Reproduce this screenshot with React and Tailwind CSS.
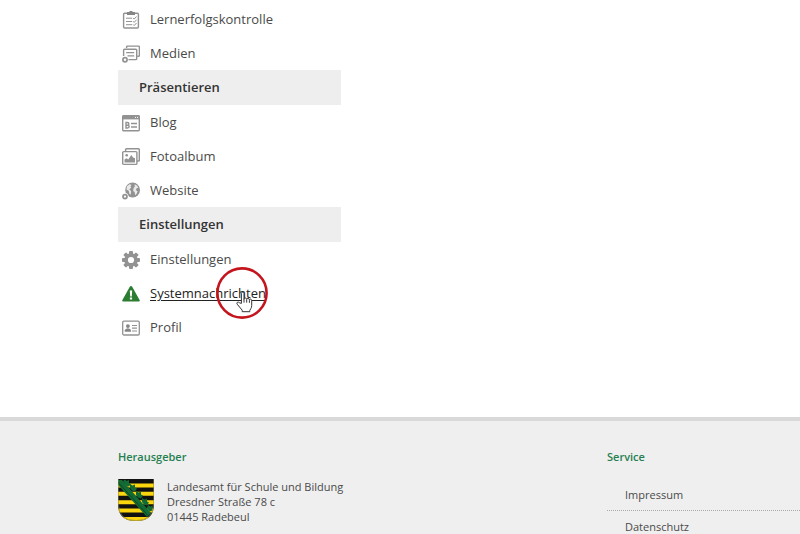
import React from "react";

const iconClass = "w-[18px] h-[18px] flex-shrink-0";

const icons = {
  checklist: (
    <svg className={iconClass} viewBox="0 0 18 18" fill="none" stroke="#929292">
      <rect x="1.6" y="2.2" width="14.8" height="14.8" rx="1" strokeWidth="1.4" />
      <path d="M5 1h2.2a1.9 1.9 0 0 1 3.6 0H13v3H5z" fill="#858585" stroke="none" />
      <path d="M4 7.2h6M4 10.5h6M4 13.7h6" />
      <path d="M11 6.9l1.2 1.2 2.3-2.6M11 10.2l1.2 1.2 2.3-2.6M11 13.4l1.2 1.2 2.3-2.6" />
    </svg>
  ),
  media: (
    <svg className={iconClass} viewBox="0 0 18 18" fill="none" stroke="#929292" strokeWidth="1.4">
      <path d="M4.6 3V2q0-.9.9-.9h11q.9 0 .9.9v8.4q0 .9-.9.9h-1.3" />
      <path d="M1.6 11V5.1q0-.9.9-.9h11.3q.9 0 .9.9v8.6q0 .9-.9.9H6.5" />
      <path d="M4.2 7.7h8M5.5 10.9h6.7" strokeWidth="1.2" />
      <circle cx="3" cy="14.8" r="2.1" strokeWidth="1.7" />
    </svg>
  ),
  blog: (
    <svg className={iconClass} viewBox="0 0 18 18" fill="none" stroke="#929292">
      <rect x="0.7" y="1.6" width="16.6" height="15.2" rx="1" strokeWidth="1.4" />
      <path d="M0.6 1.4h16.8v4H0.6z" fill="#929292" stroke="none" />
      <path d="M13 3.4h1M15 3.4h1" stroke="#fff" />
      <path d="M4 8.5v5.5M3.3 8.5h2.2q1.4 0 1.4 1.3t-1.4 1.4H4.2M5.5 11.2q1.7 0 1.7 1.4T5.5 14H3.3" strokeWidth="1.4" />
      <path d="M9 9.5h6M9 13h6" strokeWidth="1.6" />
    </svg>
  ),
  photo: (
    <svg className={iconClass} viewBox="0 0 18 18" fill="none" stroke="#929292" strokeWidth="1.4">
      <path d="M3.6 3V1.4q0-.6.8-.6h12.2q.7 0 .7.8v10.6q0 .8-.8.8H15" />
      <rect x="0.7" y="3.6" width="14.2" height="12.8" rx="1" />
      <path d="M2.5 14.5v-3l2-1.2 1.8 1.2 3-4.5 1.8 2.6 1.9.6v4.3z" fill="#929292" stroke="none" />
      <circle cx="4.7" cy="7.2" r="1.3" fill="#929292" stroke="none" />
    </svg>
  ),
  website: (
    <svg className={iconClass} viewBox="0 0 18 18">
      <circle cx="10.6" cy="8" r="7.4" fill="#929292" />
      <path
        d="M5 4.2l2.6-1.9 1.8.4-.9 1.8.7 1.2-1.9 1.6 1.8 2-.4 3.4-1.3-1-.7-2.9-2.3-1.2zM12.6 2.2l2.4 1.3 1.3 2.3-1.6.4-1 1.8 1.9 1.2-.9 2.6-1.6 1.4-.4-3-1.6-1.5.5-2.7 1.2-1.2z"
        fill="#fff"
        opacity="0.8"
      />
      <circle cx="3" cy="14.6" r="3.5" fill="#fff" />
      <circle cx="3" cy="14.6" r="2" fill="none" stroke="#929292" strokeWidth="1.7" />
    </svg>
  ),
  gear: (
    <svg className={iconClass} viewBox="0 0 18 18">
      <g fill="#929292">
        <rect x="7" y="0" width="4" height="18" rx="1" />
        <rect x="7" y="0" width="4" height="18" rx="1" transform="rotate(45 9 9)" />
        <rect x="7" y="0" width="4" height="18" rx="1" transform="rotate(90 9 9)" />
        <rect x="7" y="0" width="4" height="18" rx="1" transform="rotate(135 9 9)" />
        <circle cx="9" cy="9" r="6.8" />
      </g>
      <circle cx="9" cy="9" r="3.1" fill="#fff" />
    </svg>
  ),
  warning: (
    <svg className={iconClass} viewBox="0 0 18 18">
      <path d="M9 .9q.8 0 1.2.8l7.5 13.5q.5 1.3-.9 1.4H1.2q-1.4-.1-.9-1.4L7.8 1.7Q8.2.9 9 .9z" fill="#2c7d32" />
      <path d="M7.8 5.4h2.4l-.4 6H8.2zM7.9 12.5h2.2v2.1H7.9z" fill="#fff" />
    </svg>
  ),
  profile: (
    <svg className={iconClass} viewBox="0 0 18 18" fill="none" stroke="#929292">
      <rect x="0.7" y="2.2" width="16.6" height="13.8" rx="1.2" strokeWidth="1.3" />
      <circle cx="5.9" cy="7.1" r="1.9" fill="#858585" stroke="none" />
      <path d="M2.8 12.7v-1.4q.3-1.6 3.1-2 2.8.4 3.1 2v1.4z" fill="#858585" stroke="none" />
      <path d="M10 6.5h5M10 9.2h5M10 12h5" strokeWidth="1.2" />
    </svg>
  ),
};

const groups = [
  {
    items: [
      { label: "Lernerfolgskontrolle", icon: "checklist" },
      { label: "Medien", icon: "media" },
    ],
  },
  {
    title: "Präsentieren",
    items: [
      { label: "Blog", icon: "blog" },
      { label: "Fotoalbum", icon: "photo" },
      { label: "Website", icon: "website" },
    ],
  },
  {
    title: "Einstellungen",
    items: [
      { label: "Einstellungen", icon: "gear" },
      { label: "Systemnachrichten", icon: "warning", active: true },
      { label: "Profil", icon: "profile" },
    ],
  },
];

function Pointer() {
  return (
    <svg
      className="absolute left-[97px] top-[-10px] w-[54px] h-[54px] pointer-events-none"
      viewBox="0 0 54 54"
      fill="none"
    >
      <circle cx="27" cy="27" r="24.6" stroke="#c4151c" strokeWidth="2.6" />
      <path
        d="M26.4 37.4V27.6q0-1.5 1.3-1.5t1.3 1.5v5.6q.2-1.3 1.4-1.2t1.3 1.4q.3-1.1 1.4-1t1.3 1.4q.2-.9 1.2-.7t1.1 1.5v5q0 1.8-.9 3l-1 1.8v1.3h-7.6v-1.5l-5-6q-.9-1.3.2-1.9 1.2-.5 2.3.6z"
        fill="#fff"
        stroke="#333"
        strokeWidth="1"
        strokeLinejoin="round"
      />
      <path d="M29 33v3.6M31.7 33.6v3M34.4 34.2v2.6" stroke="#333" />
    </svg>
  );
}

function MenuItem({ label, icon, active }) {
  return (
    <li className="relative">
      <a
        href="#"
        className={`flex items-center gap-[10px] h-[34px] pt-0.5 pl-1 hover:underline ${
          active ? "font-medium text-[#222222] underline underline-offset-2" : "text-[#4a4a4a]"
        }`}
      >
        {icons[icon]}
        {label}
      </a>
      {active && <Pointer />}
    </li>
  );
}

function Crest() {
  return (
    <svg className="w-9 h-[42px] flex-shrink-0" viewBox="0 0 36 42">
      <defs>
        <clipPath id="shield">
          <path d="M0 0h36v25q0 17-18 17T0 25z" />
        </clipPath>
      </defs>
      <g clipPath="url(#shield)">
        <path d="M0 0h36v42H0z" fill="#111" />
        <path
          d="M0 4.4h36v4H0zM0 12.8h36v4H0zM0 21.2h36v4H0zM0 29.6h36v4H0zM0 38h36v4H0z"
          fill="#fbd50d"
        />
        <path d="M0 1h4l29 33-4 4L0 6z" fill="#126a35" />
        <g fill="#126a35">
          <path d="M5 2l2-1.5 1.5 1.5L11 1v3l2 1-2 2.5-3-1z" />
          <path d="M12 9l0-4 2.5 1.5L17 5.5v3l2 1-2 3-3-1z" />
          <path d="M18 16l0-4 2.5 1.5 2.5-1v3l2 1-2 3-3-1z" />
          <path d="M24 23l0-4 2.5 1.5 2.5-1v3l2 1-2 3-3-1z" />
          <path d="M29 29l1-3 2.5 1.5 2-1v5l-3 1z" />
        </g>
        <path d="M0 3l30 33.5" stroke="#0b3f20" strokeWidth="0.8" />
      </g>
      <path d="M.4 0v25q0 16.6 17.6 16.6T35.6 25V0" fill="none" stroke="#8b8550" strokeWidth="0.6" />
    </svg>
  );
}

export default function App() {
  return (
    <div className="h-screen overflow-hidden flex flex-col bg-white font-['Open_Sans',sans-serif]">
      <nav className="flex-shrink-0 pl-[118px] pt-[2px] pb-[73px] text-[13px]">
        <div className="max-w-[223px]">
          {groups.map((group, i) => (
            <section key={i}>
              {group.title && (
                <h2 className="flex items-center h-[35px] pl-[21px] bg-[#eeeeee] font-semibold text-[#333333]">
                  {group.title}
                </h2>
              )}
              <ul>
                {group.items.map((item) => (
                  <MenuItem key={item.label} {...item} />
                ))}
              </ul>
            </section>
          ))}
        </div>
      </nav>

      <footer className="flex-1 grid grid-cols-[1fr_193px] pl-[118px] pt-7 border-t-4 border-[#d9d9d9] bg-[#efefef] text-[11px] leading-[15px] text-[#4a4a4a]">
        <div>
          <h3 className="font-semibold text-[#267f50]">Herausgeber</h3>
          <div className="flex gap-[13px] mt-[15px]">
            <Crest />
            <address className="not-italic">
              Landesamt für Schule und Bildung
              <br />
              Dresdner Straße 78 c
              <br />
              01445 Radebeul
            </address>
          </div>
        </div>
        <div>
          <h3 className="font-semibold text-[#267f50]">Service</h3>
          <ul className="mt-[15px]">
            <li className="border-b border-dotted border-[#aaaaaa]">
              <a href="#" className="block py-2 pl-[18px]">Impressum</a>
            </li>
            <li className="border-b border-dotted border-[#aaaaaa]">
              <a href="#" className="block py-2 pl-[18px]">Datenschutz</a>
            </li>
          </ul>
        </div>
      </footer>
    </div>
  );
}
